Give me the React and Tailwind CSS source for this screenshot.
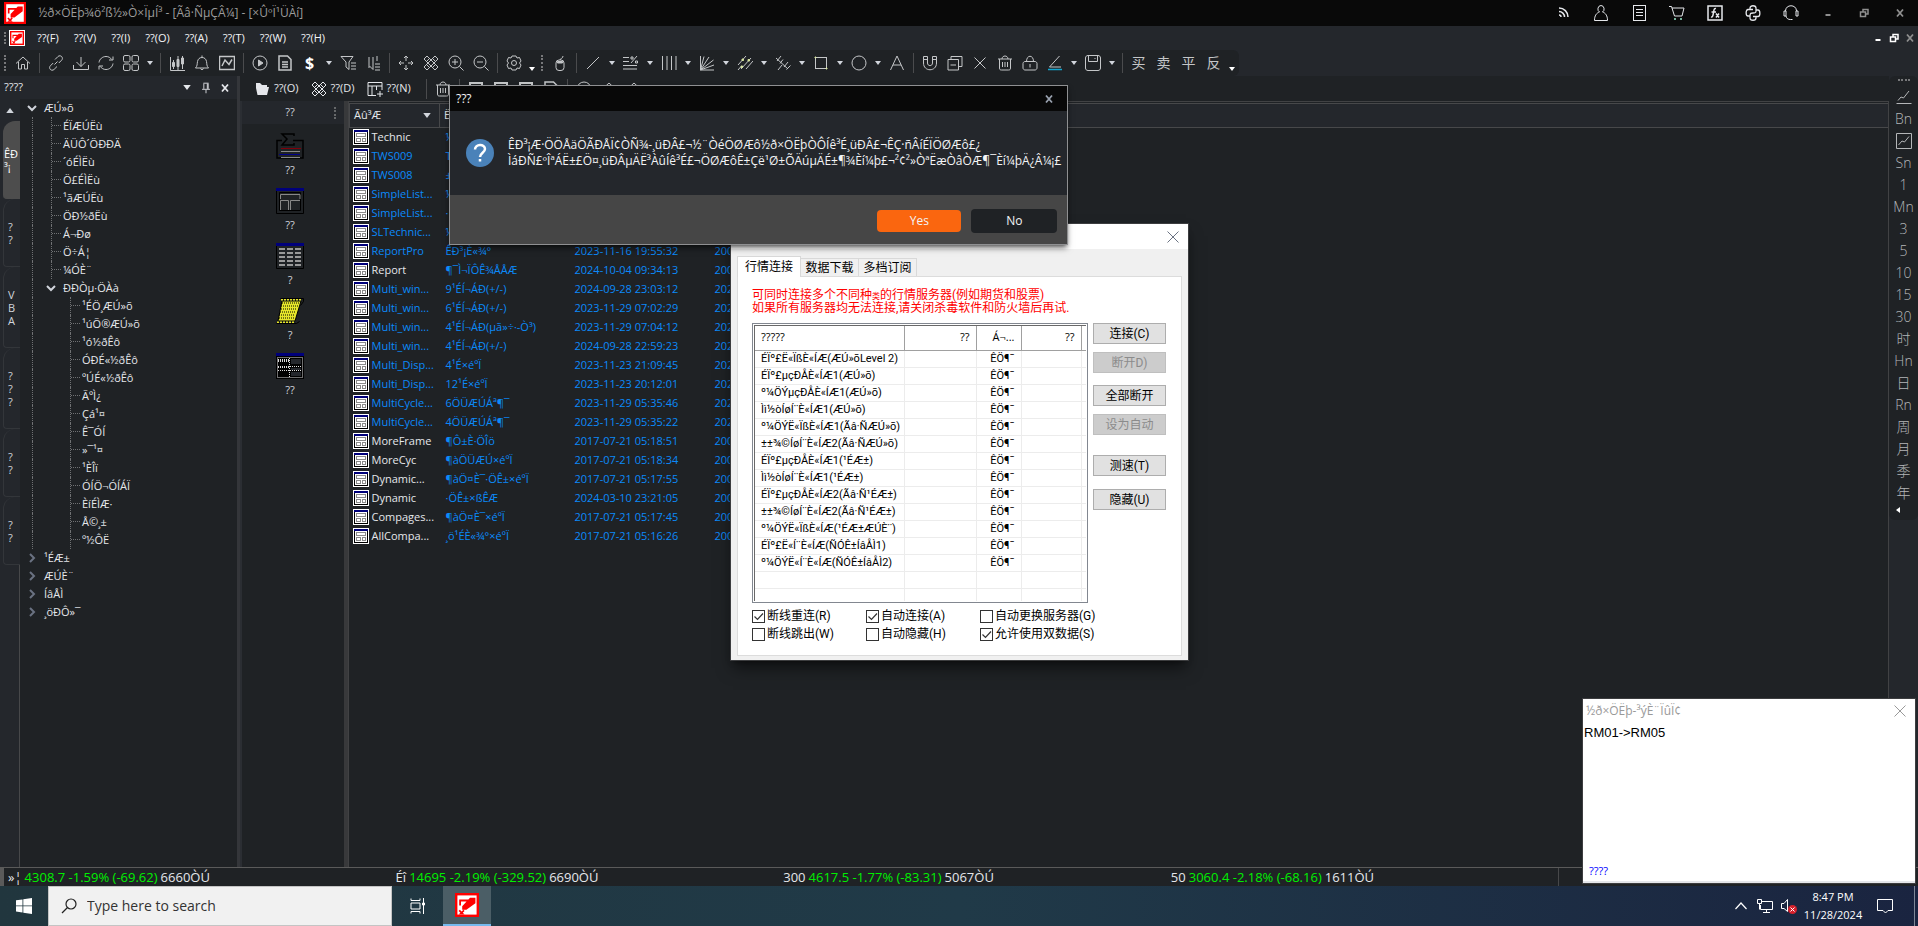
import React from "react";

const UI_FONT = "font-['Open_Sans','Noto_Sans_CJK_SC',sans-serif]";

/* 16x16 line drawings used by every toolbar */
const ICONS = {
  home: <path d="M1 8.5 8 2l7 6.5M3.5 7v7h3v-4.5h3V14h3V7" />,
  link: <path d="m6.5 9.5 3-3M7 4.5l2.8-2.8a2.6 2.6 0 0 1 4.5 1c.3 1-.1 1.900-.7 2.500L10.800 8M9 11.500 6.200 14.300a2.600 2.600 0 0 1-4.500-1c-.3-1 .1-1.900.7-2.500L5.200 8" />,
  download: <path d="M8 2v9.500M3.500 7 8 11.500 12.500 7M.5 10v4.500h15V10" />,
  refresh: <path d="M1 7.500C1.500 4 4.500 1.500 8 1.500c2.500 0 4.500 1.200 5.700 3M15 1.500v3.500h-4M15 8.500c-.5 3.500-3.500 6-7 6-2.500 0-4.500-1.200-5.700-3M1 14.500V11h4" />,
  grid: (
    <>
      <rect x=".5" y=".5" width="6.500" height="6.500" rx="1.500" />
      <rect x="9" y=".5" width="6.500" height="6.500" rx="1.500" />
      <rect x=".5" y="9" width="6.500" height="6.500" rx="1.500" />
      <rect x="9" y="9" width="6.500" height="6.500" rx="1.500" />
    </>
  ),
  candles: (
    <>
      <path d="M1.500 2v13.500H16M4.500 5v9M9 1v14M13.500 1v13" />
      <path fill="currentColor" d="M3.500 7.500h2v4h-2zM8 4.500h2v7H8zM12.500 3h2v6h-2z" />
    </>
  ),
  bell: <path d="M1.500 13h13C12.500 11 13 9 12.500 6.500 12 4 10.500 2.500 8 2.500S4 4 3.500 6.500C3 9 3.500 11 1.500 13ZM8 .5v2M6.500 13.500c.3 1.500 2.700 1.500 3 0" />,
  chart: (
    <>
      <rect x=".5" y="1.500" width="15" height="13" strokeWidth="1.500" />
      <path strokeWidth="1.500" d="m3 11 3-6 4 4.500 3-5" />
    </>
  ),
  play: (
    <>
      <circle cx="8" cy="8" r="7" />
      <path fill="currentColor" d="M6.500 5v6L11 8z" />
    </>
  ),
  doc: <path strokeWidth="1.500" d="M2 1h8.500L14 4.500V15H2zM5 7h6M5 9.500h6M5 12h6" />,
  filter: <path d="M1 1.500h12L9 7v7.500L6 12V7L1 1.500M11 8h5M11 11h5M11 14h5" />,
  sort: <path d="M4 13V2M8 2v12.500L4.500 11M10 9h5M10 12h5M10 15h5M12 1v5" />,
  move: <path d="M8 1v5M8 10v5M1 8h5M10 8h5M6 3l2-2 2 2M6 13l2 2 2-2M3 6 1 8l2 2M13 6l2 2-2 2" />,
  tools: <path d="m1 4 3-3 11 11-3 3zM12 1l3 3L4 15l-3-3zM4 6l2-2M10 12l2-2M10 4l2 2M4 10l2 2" />,
  zoomIn: <path d="M7 1a6 6 0 1 0 0 12A6 6 0 1 0 7 1ZM11.500 11.500 15.500 15.500M4 7h6M7 4v6" />,
  zoomOut: <path d="M7 1a6 6 0 1 0 0 12A6 6 0 1 0 7 1ZM11.500 11.500 15.500 15.500M4 7h6" />,
  gear: (
    <>
      <path d="M6 1h4l1 2 2.500-.5L15 6l-1.500 2L15 10l-1.500 3.500L11 13l-1 2H6l-1-2-2.500.5L1 10l1.500-2L1 6l1.500-3.500L5 3z" />
      <circle cx="8" cy="8" r="2.500" />
    </>
  ),
  mouse: (
    <>
      <rect x="4" y="5" width="8" height="10.500" rx="3" />
      <path fill="currentColor" d="M5.500 6.500h5v1.500h-5z" />
      <path d="M8 5c0-2 3-1 3-4" />
    </>
  ),
  line: <path d="M2 14 14 2" />,
  percent: <path d="M0 2.500h6M0 6.500h6M0 10.500h14M0 14h14M14 1 8 8M8 2h2v2H8zM12.500 6h2v2h-2z" />,
  bars: <path d="M1.500 1v14M6 1v14M10.500 1v14M15 1v14" />,
  fan: <path d="M1.500 1v14H15M1.500 15 5 1.500M1.500 15 10 2M1.500 15 14.500 5M1.500 15 15 10" />,
  trend: (
    <>
      <path d="M1 10 9 1M4 14 14 3M1 15 4 11.500M9 14 16 6" />
      <path stroke="#d6e3a0" fill="#d6e3a0" d="M5 4h1.500v1.500H5zM11 4.500h1.500V6H11zM4 11h1.500v1.500H4z" />
    </>
  ),
  pitch: <path d="m1 3 12 11M2 6l4-5M5 8.500l3-4M9 12l4-5M11.500 14.500l4-4M3 15l4-5" />,
  rect: (
    <>
      <rect x="2.500" y="2.500" width="11" height="11" />
      <path stroke="#d6e3a0" fill="#d6e3a0" d="M2 2h1v1H2zM13 13h1v1h-1z" />
    </>
  ),
  circle: <circle cx="8" cy="8" r="7" />,
  letter: <path d="M1.500 15 8 1l6.500 14M4 10h8" />,
  magnet: <path d="M1.500 1.500h4V8c0 3.500 5 3.500 5 0V1.500h4V8c0 9-13 9-13 0ZM1.500 4.500h4M10.500 4.500h4" />,
  copy: <path d="M1 4.500h10.500V15H1zM4 4.500v-3h11v10h-3.500M3.500 10h5.500" />,
  cross: <path d="m2.500 2.500 11 11M13.500 2.500l-11 11" />,
  trash: <path d="M1 4h14M2.500 4v9c0 1.500.5 2 2 2h7c1.500 0 2-.5 2-2V4M5 4c0-4 6-4 6 0M5.500 7v5M8 7v5M10.500 7v5" />,
  lock: <path d="M3 6.500h10c1 0 2 1 2 2V13c0 1-1 2-2 2H3c-1 0-2-1-2-2V8.500c0-1 1-2 2-2ZM4.500 6.500c0-7 7-7 7 0M8 9v3.500" />,
  pen: (
    <>
      <path d="M12.500 1 2.500 12H14" />
      <path stroke="#12a5cf" strokeWidth="1.500" d="M1 14.500h14" />
    </>
  ),
  save: <path d="M3 .5h10c1.500 0 2.500 1 2.500 2.500v10c0 1.500-1 2.500-2.500 2.500H3C1.500 15.500.5 14.500.5 13V3C.5 1.500 1.500.5 3 .5ZM3.500 1v5.500h9V1M9.500 3.500h1" />,
  folder: <path fill="currentColor" stroke="none" d="M2 2h4l2 2h5v2h2l-2 8H3.500L2 7z" />,
  newTable: <path d="M9 14.500H1v-13h14V9M1 5h14M5 5v9.500M9.500 5v4M13 10v6M10 13h6" />,
  square: <path strokeWidth="2" d="M2 2h12v12H2zM5 6h6" />,
  rss: <path strokeWidth="1.500" d="M4 3c5 0 9 4 9 9M4 6.500c3 0 5.500 2.500 5.500 5.500M4 10c1 0 2 1 2 2" />,
  user: <path d="M8 .5a3.300 3.500 0 0 1 1.500 6.500c3 1 5 3.500 5 8.500h-13c0-5 2-7.500 5-8.500A3.300 3.500 0 0 1 8 .5Z" />,
  sheet: (
    <>
      <rect x="2.500" y=".5" width="12" height="15" />
      <path d="M5 4.500h7M5 7.500h7M5 10.500h7" />
    </>
  ),
  cart: (
    <>
      <path d="M0 1.500h2.500L5.500 11h7.500l2-8H3" />
      <path stroke="#8fd8bd" fill="#8fd8bd" d="M5.500 13.500h1v1h-1zM11.500 13.500h1v1h-1z" />
    </>
  ),
  fx: (
    <>
      <rect x="1" y="1" width="14" height="14" strokeWidth="1.500" />
      <path strokeWidth="1.500" d="M9 3.500c-2-.5-2 1.500-2.500 4S6 12.500 4 12M4.500 7H9M9 8.500l3 4M12 8.500l-3 4" />
    </>
  ),
  python: <path strokeWidth="1.300" d="M5 4.500V3c0-3 6-3 6 0v3c0 2-1 2-3 2s-3 0-3 3M8 4.500H3C.5 4.500.5 11 3 11h2M11 11.500V13c0 3-6 3-6 0v-2M11 5h2c2.500 0 2.500 6.500 0 6.500H8" />,
  headset: <path d="M2.500 6c0-7 11-7 11 0M1 6h2v5H1zM13 6h2v5h-2zM3 11c.5 2.500 2 3.500 4.500 3.500h2" />,
  minimise: <path strokeWidth="2" d="M5.500 10h5" />,
  restore: <path strokeWidth="1.500" d="M4.500 7h5v4.500h-5zM7 6.500v-2h5V9H9.500" />,
  close: <path strokeWidth="1.800" d="m5 4.500 6 7M11 4.500l-6 7" />,
  lineChart: <path d="M2 11.500 5 8l2.500 1L13 2M.5 14.500h15" />,
  boxChart: <path d="M.5.5h15v15H.5zM2.500 12 6 8l2.500 1L13 3.500" />,
};

const Icon = ({ name, className = "" }) => (
  <svg viewBox="0 0 16 16" fill="none" stroke="currentColor" className={`w-4 h-4 shrink-0 ${className}`}>
    {ICONS[name]}
  </svg>
);

const Caret = ({ className = "w-1.5 h-1" }) => (
  <svg viewBox="0 0 6 4" className={`shrink-0 ${className}`} fill="currentColor">
    <path d="M0 0h6L3 4z" />
  </svg>
);

const Logo = ({ className }) => (
  <svg viewBox="0 0 20 20" className={className}>
    <path fill="#f00" d="M0 0h20v20H0z" />
    <path fill="#fff" d="M2 2h16v16H2z" />
    <path fill="#f00" d="M3.500 5.500h9V7H5v3.500H3.500zM12.500 4H17v4.500L9.500 14H6v-3zM4 14l1.500 1.500L7 14l1 1-1.500 1.500L8 18H3l1.500-1.500L3 15z" />
  </svg>
);

const MENU = ["??(F)", "??(V)", "??(I)", "??(O)", "??(A)", "??(T)", "??(W)", "??(H)"];
const TITLE_ICONS = ["rss", "user", "sheet", "cart", "fx", "python", "headset"];

/* "|" separator, "v" caret of the previous tool, ":" grip, "." overflow arrow */
const TOOLS = [
  ":", "home", "|", "link", "download", "refresh", "grid", "v", "|", "candles", "bell", "chart", "|",
  "play", "doc", "$", "v", "filter", "sort", "|", "move", "tools", "zoomIn", "zoomOut", "|", "gear", ".",
  ":", "mouse", "|", "line", "v", "percent", "v", "bars", "v", "fan", "v", "trend", "v", "pitch", "v",
  "rect", "v", "circle", "v", "letter", "|", "magnet", "copy", "cross", "trash", "lock", "pen", "v",
  "save", "v", "|", "买", "卖", "平", "反", ".",
];

const Tool = ({ item }) => {
  if (item === "|") return <span className="w-2 flex justify-center"><i className="w-px h-5 bg-[#4a4b4d]" /></span>;
  if (item === "v") return <button aria-label="more" className="w-[13px] h-6 flex items-center justify-center text-gray-300"><Caret /></button>;
  if (item === ".") return <button aria-label="overflow" className="w-[11px] h-6 flex items-end justify-center pb-1 text-white"><Caret /></button>;
  if (item === ":") return <span className="w-2.5 flex justify-center"><i className="h-4 border-l-2 border-dotted border-[#77787a]" /></span>;
  return (
    <button aria-label={item} className="w-[25px] h-6 flex items-center justify-center text-[#c4c6c8] text-sm">
      {ICONS[item] ? <Icon name={item} /> : <span className={item === "$" ? "font-bold text-base text-white" : ""}>{item}</span>}
    </button>
  );
};

const TitleBar = () => (
  <header className="h-[26px] bg-[#090909] flex items-center justify-between pl-1">
    <div className="flex items-center gap-3">
      <Logo className="w-[22px] h-[22px]" />
      <h1 className="text-xs text-[#9c9c9c]">½ð×ÖËþ¾ö²ß½»Ò×ÏµÍ³ - [Ãâ·ÑµÇÂ¼] - [×ÛºÏ¹ÜÀí]</h1>
    </div>
    <div className="flex text-gray-200">
      {TITLE_ICONS.map((name) => (
        <button key={name} aria-label={name} className="w-[38px] flex justify-center">
          <Icon name={name} />
        </button>
      ))}
      {["minimise", "restore", "close"].map((name) => (
        <button key={name} aria-label={name} className="w-9 flex justify-center text-[#8f8f8f]">
          <Icon name={name} />
        </button>
      ))}
    </div>
  </header>
);

const MenuBar = () => (
  <div className="h-6 flex items-center justify-between pl-1 text-[11px] text-gray-100">
    <nav className="flex items-center gap-px">
      <i className="h-3 border-l-2 border-dotted border-[#77787a]" />
      <span className="bg-white p-px ml-0.5 mr-1"><Logo className="w-3.5 h-3.5" /></span>
      {MENU.map((label) => (
        <button key={label} className="px-[7px]">{label}</button>
      ))}
    </nav>
    <div className="flex text-white">
      <button aria-label="minimise" className="w-4"><Icon name="minimise" /></button>
      <button aria-label="restore" className="w-4"><Icon name="restore" /></button>
      <button aria-label="close" className="w-4 text-[#8f8f8f]"><Icon name="close" /></button>
    </div>
  </div>
);

const SIDE_TABS = [
  { lines: ["ÊÐ", "³¡"], height: "h-[78px]", active: true },
  { lines: ["?", "?"], height: "h-[68px]" },
  { lines: ["V", "B", "A"], height: "h-[81px]" },
  { lines: ["?", "?", "?"], height: "h-[81px]" },
  { lines: ["?", "?"], height: "h-[68px]" },
  { lines: ["?", "?"], height: "h-[68px]" },
];

const TREE = [
  [0, "ÆÚ»õ", "open"],
  [1, "ÉÏÆÚËù"], [1, "ÄÜÔ´ÖÐÐÄ"], [1, "´óÉÌËù"], [1, "Ö£ÉÌËù"], [1, "¹ãÆÚËù"],
  [1, "ÖÐ½ðËù"], [1, "Á¬Ðø"], [1, "Ö÷Á¦"], [1, "¼ÓÈ¨"],
  [1, "ÐÐÒµ·ÖÀà", "open"],
  [2, "¹ÉÖ¸ÆÚ»õ"], [2, "¹úÕ®ÆÚ»õ"], [2, "¹ó½ðÊô"], [2, "ÓÐÉ«½ðÊô"], [2, "ºÚÉ«½ðÊô"],
  [2, "ÃºÌ¿"], [2, "Çá¹¤"], [2, "Ê¯ÓÍ"], [2, "»¯¹¤"], [2, "¹ÈÎï"], [2, "ÓÍÖ¬ÓÍÁÏ"],
  [2, "ÈíÉÌÆ·"], [2, "Å©¸±"], [2, "º½ÔË"],
  [0, "¹ÉÆ±", "closed"], [0, "ÆÚÈ¨", "closed"], [0, "ÍâÅÌ", "closed"], [0, "¸öÐÔ»¯", "closed"],
];

const Guide = () => <i className="w-3 ml-[7px] h-full border-l border-dotted border-[#6f7173]" />;
const Elbow = () => (
  <i className="w-3 ml-[7px] h-full border-l border-dotted border-[#6f7173]">
    <i className="block w-[9px] h-1/2 border-b border-dotted border-[#6f7173]" />
  </i>
);
const Chevron = ({ state }) => (
  <button aria-label={state} className="w-[19px] flex items-center pl-0.5">
    <svg viewBox="0 0 10 10" className={`w-2.5 h-2.5 ${state === "open" ? "text-gray-300" : "text-gray-500"}`} fill="none" stroke="currentColor" strokeWidth="2">
      <path d={state === "open" ? "M1 3l4 4 4-4" : "M3 1l4 4-4 4"} />
    </svg>
  </button>
);

const TreePanel = () => (
  <section className="w-[237px] shrink-0 flex flex-col">
    <div className="h-[23px] flex items-center justify-between pl-1 pr-1 text-[11px] text-gray-200">
      <h2>????</h2>
      <div className="flex items-center gap-1">
        <button aria-label="options"><Caret className="w-2 h-[5px] mr-1" /></button>
        <button aria-label="pin">
          <svg viewBox="0 0 16 16" className="w-3.5 h-3.5" fill="none" stroke="currentColor"><path d="M5 2.500h6M5.500 3v6M10.500 3v6M9.500 3v6M3.500 9.500h9M8 10v4" /></svg>
        </button>
        <button aria-label="close"><Icon name="close" /></button>
      </div>
    </div>
    <div className="flex flex-1">
      <div className="w-5 flex flex-col text-[11px] leading-[13px] text-gray-300">
        <button aria-label="scroll up" className="h-[22px] flex items-center justify-center"><Caret className="rotate-180 w-2 h-[5px]" /></button>
        {SIDE_TABS.map((tab, i) => (
          <button
            key={i}
            className={`ml-[3px] rounded-tl-xl rounded-bl-sm border-b flex flex-col items-start justify-center ${tab.height} ${tab.active ? "bg-[#4d4d4d] border-[#4d4d4d] text-white pl-px" : "border-l border-[#33363a] pl-1"
              }`}
          >
            {tab.lines.map((line, j) => <span key={j}>{line}</span>)}
          </button>
        ))}
        <div className="flex-1 border-r border-[#47484a]" />
      </div>
      <ul className="flex-1 bg-[#1f2225] pl-[5px] text-[11px] text-gray-200">
        {TREE.map(([depth, label, state], i) => (
          <li key={i} className="h-[18px] flex items-center">
            {depth > 0 && <Guide />}
            {depth === 2 && <i className="w-[19px]" />}
            {state ? <Chevron state={state} /> : <Elbow />}
            <span className="whitespace-nowrap">{label}</span>
          </li>
        ))}
      </ul>
    </div>
  </section>
);

/* 28x26 thumbnails in the category column */
const THUMBS = [
  {
    label: "??",
    art: (
      <>
        <path fill="none" stroke="#000" strokeWidth="1.500" d="M6 7.500H1V25h26V7.500H17M18 3V1H6l5 5-5 6h12v-2" />
        <path stroke="#80000a" d="M5 15.500h20" />
        <path stroke="#888" d="M5 18.500h19M5 24.500h19" />
        <path stroke="#00008b" d="M3 21.500h21" />
      </>
    ),
  },
  {
    label: "??",
    art: (
      <>
        <path fill="none" stroke="#000" d="M.5.5h27v25H.5zM3.500 4.500h21v18h-21z" />
        <path fill="#00007b" d="M0 0h28v3H0z" />
        <path fill="none" stroke="#888" d="M4.500 22V12.500h8V22M14.500 22V12.500H24M4.500 11V6.500H24V11" />
      </>
    ),
  },
  {
    label: "?",
    art: (
      <>
        <path fill="none" stroke="#000" d="M.5.5h27v25H.5z" />
        <path fill="#00007b" d="M0 0h28v3H0z" />
        <path stroke="#999" strokeWidth="2" strokeDasharray="6 2" d="M3 6h22M3 10h22M3 14h22M3 18h22M3 22h22" />
      </>
    ),
  },
  {
    label: "?",
    art: (
      <>
        <path fill="#e6e62a" stroke="#000" d="M6 3h19l-6 20H2z" />
        <path stroke="#000" strokeDasharray="1 1" d="M6 5h17M5 8h17M5 11h16M4 14h16M3 17h16M3 20h15" />
        <path stroke="#e6e62a" strokeWidth="2" strokeDasharray="2 1" d="M5 1.500h20M1 24.500h18" />
        <path fill="none" stroke="#000" d="M4.500.5h23v3l-3 4M.5 25.500h20l3-2" />
      </>
    ),
  },
  {
    label: "??",
    art: (
      <>
        <path fill="#000" d="M0 0h28v26H0z" />
        <path fill="#00007b" d="M0 0h28v3H0z" />
        <path fill="none" stroke="#ddd" strokeDasharray="1 1" d="M1.500 4.500h25v20h-25zM2 6.500h11M2 7.500h11M2 8.500h11M2 13.500h24M2 14.500h11M2 17.500h24M13.500 5v19" />
        <path fill="#24272c" d="M15 6h10v5H15zM15 15h10v2H15zM15 19h10v4H15z" />
      </>
    ),
  },
];

const Categories = () => (
  <section className="w-[104px] shrink-0 border-l-2 border-[#2b2e33] bg-[#1f2225]">
    <div className="h-[23px] bg-[#24272c] flex items-center pr-2 text-[11px] text-gray-300">
      <h2 className="flex-1 text-center pl-1">??</h2>
      <i className="h-3 border-l-2 border-dotted border-[#66686a]" />
    </div>
    <div className="flex flex-col items-center pr-1.5 pt-[9px] text-[11px] text-gray-300">
      {THUMBS.map((thumb, i) => (
        <button key={i} className="h-[55px] flex flex-col items-center gap-[3px]">
          <svg viewBox="0 0 28 26" className="w-7 h-[26px] shrink-0">{thumb.art}</svg>
          <span>{thumb.label}</span>
        </button>
      ))}
    </div>
  </section>
);

/* name, description, modified, created, highlighted */
const FILES = [
  ["Technic", "½", "", "", false],
  ["TWS009", "T", "", "", true],
  ["TWS008", "±", "", "", true],
  ["SimpleList...", "½", "", "", true],
  ["SimpleList...", "·", "", "", true],
  ["SLTechnic...", "½", "", "", true],
  ["ReportPro", "ÊÐ³¡È«¾°", "2023-11-16 19:55:32", "200", true],
  ["Report", "¶¯Ì¬ÏÔÊ¾ÅÅÆ", "2024-10-04 09:34:13", "200", false],
  ["Multi_win...", "9¹ÉÍ¬ÁÐ(+/-)", "2024-09-28 23:03:12", "202", true],
  ["Multi_win...", "6¹ÉÍ¬ÁÐ(+/-)", "2023-11-29 07:02:29", "202", true],
  ["Multi_win...", "4¹ÉÍ¬ÁÐ(µã»÷·-Ò³)", "2023-11-29 07:04:12", "202", true],
  ["Multi_win...", "4¹ÉÍ¬ÁÐ(+/-)", "2024-09-28 22:59:23", "202", true],
  ["Multi_Disp...", "4¹É×éºÏ", "2023-11-23 21:09:45", "202", true],
  ["Multi_Disp...", "12¹É×éºÏ", "2023-11-23 20:12:01", "202", true],
  ["MultiCycle...", "6ÖÜÆÚÁª¶¯", "2023-11-29 05:35:46", "202", true],
  ["MultiCycle...", "4ÖÜÆÚÁª¶¯", "2023-11-29 05:35:22", "202", true],
  ["MoreFrame", "¶Ô±È·ÖÎö", "2017-07-21 05:18:51", "200", false],
  ["MoreCyc", "¶àÖÜÆÚ×éºÏ", "2017-07-21 05:18:34", "200", false],
  ["Dynamic...", "¶àÖ¤È¯·ÖÊ±×éºÏ", "2017-07-21 05:17:55", "200", false],
  ["Dynamic", "·ÖÊ±×ßÊÆ", "2024-03-10 23:21:05", "200", false],
  ["Compages...", "¶àÖ¤È¯×éºÏ", "2017-07-21 05:17:45", "200", false],
  ["AllCompa...", "¸ö¹ÉÈ«¾°×éºÏ", "2017-07-21 05:16:26", "200", false],
];

const FileIcon = () => (
  <svg viewBox="0 0 16 16" className="w-4 h-4 shrink-0" shapeRendering="crispEdges">
    <path fill="#fff" d="M0 0h16v16H0z" />
    <path fill="#000" d="M1 1h14v14H1z" />
    <path fill="#fff" d="M2 3h12v11H2z" />
    <path fill="#00007b" d="M1 1h14v2H1z" />
    <path fill="none" stroke="#8a8a8a" d="M3.500 4.500h9v3h-9zM3.500 9.500h4v3h-4zM9.500 9.500h3v3h-3z" />
  </svg>
);

const FileList = () => (
  <section className="flex-1 min-w-0 border-l border-r border-t border-[#414244] bg-[#1f2225] pt-px">
    <table className="w-full table-fixed border-collapse text-[11px] text-left">
      <colgroup>
        <col className="w-[90px]" />
        <col className="w-[131px]" />
        <col className="w-[140px]" />
        <col />
      </colgroup>
      <thead className="bg-[#24272c] text-gray-200 border-y border-[#47484a]">
        <tr className="h-6">
          <th className="font-normal border-x border-[#47484a] pl-1 pr-2">
            <span className="flex items-center justify-between">Ãû³Æ<Caret className="w-2 h-[5px] text-gray-300" /></span>
          </th>
          <th className="font-normal pl-1">Ë</th>
          <th />
          <th />
        </tr>
      </thead>
      <tbody className="text-[#0b8afa]">
        {FILES.map(([name, desc, modified, created, highlighted], i) => (
          <tr key={i} className="h-[19px] whitespace-nowrap">
            <td className={`pl-[3px] ${highlighted ? "" : "text-gray-200"}`}>
              <span className="flex items-center gap-[3px]"><FileIcon />{name}</span>
            </td>
            <td className="pl-1.5">{desc}</td>
            <td className="pl-1">{modified}</td>
            <td className="pl-1">{created}</td>
          </tr>
        ))}
      </tbody>
    </table>
  </section>
);

const PERIODS = ["lineChart", "Bn", "boxChart", "Sn", "1", "Mn", "3", "5", "10", "15", "30", "时", "Hn", "日", "Rn", "周", "月", "季", "年"];

const PeriodBar = () => (
  <aside className="w-[29px] shrink-0">
    <div className="bg-[#1f2225] rounded-md flex flex-col items-center pt-[3px] pb-1 text-sm text-[#b4b6b8]">
      <i className="w-3 mb-[5px] border-t-2 border-dotted border-[#77787a]" />
      {PERIODS.map((p) => (
        <button key={p} aria-label={p} className="h-[22px] flex items-center justify-center font-light">
          {ICONS[p] ? <Icon name={p} /> : p}
        </button>
      ))}
      <button aria-label="overflow" className="h-3 self-start pl-1.5 text-white"><Caret className="rotate-90 w-1.5 h-1" /></button>
    </div>
  </aside>
);

const FileTools = () => (
  <div className="h-[25px] flex items-center pl-3.5 bg-[#1f2225] text-[11px] text-gray-200">
    <button className="flex items-center gap-1 pr-3"><Icon name="folder" />??(O)</button>
    <button className="flex items-center gap-1 pr-3"><Icon name="tools" />??(D)</button>
    <button className="flex items-center gap-1 pr-3"><Icon name="newTable" />??(N)</button>
    {["|", "trash", "|", "square", "square", "square", "doc", "|", "circle", "home", "home"].map((item, i) => (
      <Tool key={i} item={item} />
    ))}
  </div>
);

const ConfirmDialog = () => (
  <div role="dialog" className="absolute left-[449px] top-[85px] border border-[#8f9092] bg-[#24272c] shadow-md shadow-black/50 text-xs text-gray-100">
    <div className="h-[25px] bg-[#080808] flex items-center justify-between pl-1.5 pr-2.5">
      <h2>???</h2>
      <button aria-label="close" className="text-gray-400"><Icon name="close" /></button>
    </div>
    <div className="h-[84px] flex items-center gap-3.5 pl-4 pr-1.5">
      <svg viewBox="0 0 28 28" className="w-7 h-7 shrink-0">
        <circle cx="14" cy="14" r="14" fill="#4a82b9" />
        <path fill="none" stroke="#fff" strokeWidth="2.500" d="M9 10.500c0-6 10-6 10-.5 0 3.500-5 4-5 8M14 20v2.500" />
      </svg>
      <p className="leading-4 whitespace-nowrap">
        ÊÐ³¡Æ·ÖÖÅäÖÃÐÅÏ¢ÒÑ¾-¸üÐÂ£¬½¨ÒéÖØÆô½ð×ÖËþÒÔÍê³É¸üÐÂ£¬ÊÇ·ñÂíÉÏÖØÆô£¿<br />
        ÌáÐÑ£ºÎªÁË±£Ö¤¸üÐÂµÄË³ÀûÍê³É£¬ÖØÆôÊ±Çë¹Ø±ÕÄúµÄÉ±¶¾Èí¼þ£¬²¢²»ÒªËæÒâÒÆ¶¯Èí¼þÄ¿Â¼¡£
      </p>
    </div>
    <div className="h-[49px] bg-[#464646] flex items-center justify-end gap-2.5 pr-2.5 pt-0.5">
      <button className="w-[84px] h-[22px] rounded bg-[#fa660f]">Yes</button>
      <button className="w-[86px] h-6 rounded bg-[#1f2225]">No</button>
    </div>
  </div>
);

const SERVERS = [
  "ÉÏº£Ë«ÏßÈ«ÍÆ(ÆÚ»õLevel 2)",
  "ÉÏº£µçÐÅÈ«ÍÆ1(ÆÚ»õ)",
  "º¼ÖÝµçÐÅÈ«ÍÆ1(ÆÚ»õ)",
  "Ìì½òÍøÍ¨È«ÍÆ1(ÆÚ»õ)",
  "º¼ÖÝË«ÏßÈ«ÍÆ1(Ãâ·ÑÆÚ»õ)",
  "±±¾©ÍøÍ¨È«ÍÆ2(Ãâ·ÑÆÚ»õ)",
  "ÉÏº£µçÐÅÈ«ÍÆ1(¹ÉÆ±)",
  "Ìì½òÍøÍ¨È«ÍÆ1(¹ÉÆ±)",
  "ÉÏº£µçÐÅÈ«ÍÆ2(Ãâ·Ñ¹ÉÆ±)",
  "±±¾©ÍøÍ¨È«ÍÆ2(Ãâ·Ñ¹ÉÆ±)",
  "º¼ÖÝË«ÏßÈ«ÍÆ(¹ÉÆ±ÆÚÈ¨)",
  "ÉÏº£Ë«Í¨È«ÍÆ(ÑÓÊ±ÍâÅÌ1)",
  "º¼ÖÝË«Í¨È«ÍÆ(ÑÓÊ±ÍâÅÌ2)",
  "",
  "",
];

const OPTIONS = [
  ["断线重连(R)", true],
  ["自动连接(A)", true],
  ["自动更换服务器(G)", false],
  ["断线跳出(W)", false],
  ["自动隐藏(H)", false],
  ["允许使用双数据(S)", true],
];

const ActionButton = ({ children, className = "", disabled = false }) => (
  <button disabled={disabled} className={`w-[73px] h-[21px] border border-[#adadad] bg-[#e1e1e1] disabled:bg-[#cccccc] disabled:border-[#bfbfbf] disabled:text-[#8b8b8b] ${className}`}>
    {children}
  </button>
);

const ServerDialog = () => (
  <div role="dialog" className="absolute left-[730px] top-[223px] w-[459px] border border-[#3c3d3f] bg-[#f0f0f0] shadow-lg shadow-black/50 text-xs text-black font-['Roboto','Noto_Sans_CJK_SC',sans-serif]">
    <div className="h-[25px] bg-white flex items-center justify-end pr-[7px]">
      <button aria-label="close" className="text-gray-500"><Icon name="cross" /></button>
    </div>
    <div className="px-1.5 pt-[7px] pb-1">
      <div role="tablist" className="flex items-end">
        <button role="tab" className="h-[21px] w-16 -mb-px bg-white border border-b-0 border-[#d9d9d9] relative">行情连接</button>
        <button role="tab" className="h-[18px] w-[58px] border border-b-0 border-l-0 border-[#d9d9d9]">数据下载</button>
        <button role="tab" className="h-[18px] w-[58px] border border-b-0 border-l-0 border-[#d9d9d9]">多档订阅</button>
      </div>
      <div className="bg-white border border-[#dcdcdc] pl-3.5 pt-3 pb-3">
        <p className="text-[#f00] leading-[13px] whitespace-nowrap">
          可同时连接多个不同种<span className="text-[8px] leading-none">类</span>的行情服务器(例如期货和股票)<br />
          如果所有服务器均无法连接,请关闭杀毒软件和防火墙后再试.
        </p>
        <div className="flex gap-[5px] mt-2">
          <div className="w-[336px] h-[280px] border border-[#828790] p-px overflow-hidden">
            <div className="h-full border-l border-t border-[#696969] overflow-hidden">
              <table className="w-full table-fixed border-collapse">
                <colgroup>
                  <col className="w-[149px]" />
                  <col className="w-[72px]" />
                  <col className="w-[45px]" />
                  <col className="w-[60px]" />
                  <col />
                </colgroup>
                <thead>
                  <tr className="h-6 border-b border-[#a0a0a0] font-['Open_Sans',sans-serif] text-[11px]">
                    <th className="font-normal text-left pl-1.5 border-r border-[#a0a0a0]">?????</th>
                    <th className="font-normal text-right pr-1.5 border-r border-[#a0a0a0]">??</th>
                    <th className="font-normal text-right pr-1.5 border-r border-[#a0a0a0]">Á¬...</th>
                    <th className="font-normal text-right pr-1.5 border-r border-[#a0a0a0]">??</th>
                    <th />
                  </tr>
                </thead>
                <tbody className="text-[11px]">
                  {SERVERS.map((name, i) => (
                    <tr key={i} className="h-[17px] leading-4 border-b border-[#ececec] whitespace-nowrap">
                      <td className="pl-1.5 border-r border-[#ececec]">{name}</td>
                      <td className="border-r border-[#ececec]" />
                      <td className="border-r border-[#ececec] text-right pr-1.5">{name && "ÊÖ¶¯"}</td>
                      <td className="border-r border-[#ececec]" />
                      <td />
                    </tr>
                  ))}
                </tbody>
              </table>
            </div>
          </div>
          <div className="flex flex-col">
            <ActionButton>连接(C)</ActionButton>
            <ActionButton disabled className="mt-2">断开D)</ActionButton>
            <ActionButton className="mt-3">全部断开</ActionButton>
            <ActionButton disabled className="mt-2">设为自动</ActionButton>
            <ActionButton className="mt-5">测速(T)</ActionButton>
            <ActionButton className="mt-[13px]">隐藏(U)</ActionButton>
          </div>
        </div>
        <div className="grid grid-cols-[114px_114px_1fr] mt-1">
          {OPTIONS.map(([label, checked]) => (
            <label key={label} className="h-[18px] flex items-center gap-0.5">
              <span className="grid w-[13px] h-[13px]">
                <input type="checkbox" defaultChecked={checked} className="peer appearance-none col-start-1 row-start-1 w-[13px] h-[13px] border border-[#333] bg-white" />
                <svg viewBox="0 0 13 13" className="col-start-1 row-start-1 w-[13px] h-[13px] hidden peer-checked:block pointer-events-none" fill="none" stroke="#333" strokeWidth="1.200">
                  <path d="m2.500 6.500 3 3 5.500-6" />
                </svg>
              </span>
              {label}
            </label>
          ))}
        </div>
      </div>
    </div>
  </div>
);

const Notice = () => (
  <div role="dialog" className="absolute right-0.5 bottom-[42px] w-[334px] h-[186px] border border-[#3c3d3f] bg-white flex flex-col">
    <div className="h-6 flex items-center justify-between pl-[3px] pr-[7px] text-xs text-[#999]">
      <h2>½ð×ÖËþ-³ýÈ¨ÏûÏ¢</h2>
      <button aria-label="close"><Icon name="cross" /></button>
    </div>
    <p className="flex-1 pl-px text-[13px] leading-5 text-black font-['Liberation_Sans',sans-serif]">RM01-&gt;RM05</p>
    <a href="#" className="pl-1.5 pb-0.5 text-[11px] text-[#0000ff] border-b-2 border-[#e4e6ea]">????</a>
  </div>
);

const QUOTES = [
  ["»¦", "4308.7 -1.59% (-69.62)", "6660ÒÚ"],
  ["Éî", "14695 -2.19% (-329.52)", "6690ÒÚ"],
  ["300", "4617.5 -1.77% (-83.31)", "5067ÒÚ"],
  ["50", "3060.4 -2.18% (-68.16)", "1611ÒÚ"],
];

const StatusBar = () => (
  <footer className="h-[19px] shrink-0 border-t border-[#5a5a5a] bg-[#1f2225] flex items-center text-[13px] text-gray-200">
    <i className="w-1 h-full bg-[#5a5a5a]" />
    <div className="w-[81.1%] pl-1 h-full grid grid-cols-4 items-center border-r border-[#47484a]">
      {QUOTES.map(([name, move, volume]) => (
        <span key={name} className="flex gap-[3px] whitespace-nowrap">
          {name}
          <span className="text-[#00f000]">{move}</span>
          {volume}
        </span>
      ))}
    </div>
  </footer>
);

const Taskbar = () => (
  <footer className="h-10 shrink-0 flex justify-between bg-linear-to-r from-[#21363e] via-[#203a48] to-[#1a2440] text-white">
    <div className="flex">
      <button aria-label="Start" className="w-12 flex items-center justify-center">
        <svg viewBox="0 0 16 16" className="w-4 h-4" fill="#fff"><path d="M0 2.300 6.500 1.400v6.100H0zM7.300 1.300 16 0v7.500H7.300zM0 8.300h6.500v6.200L0 13.600zM7.300 8.300H16V16l-8.700-1.300z" /></svg>
      </button>
      <label className="w-[344px] flex items-center gap-2.5 pl-3 bg-[#f1f1f1] border border-[#c4c4c4] text-[#222]">
        <svg viewBox="0 0 16 16" className="w-4 h-4" fill="none" stroke="currentColor" strokeWidth="1.200"><circle cx="10" cy="6" r="5" /><path d="M6.500 9.500 1 15" /></svg>
        <input type="text" aria-label="Search" placeholder="Type here to search" className="flex-1 bg-transparent outline-none text-sm placeholder:text-[#333]" />
      </label>
      <button aria-label="Task View" className="w-[51px] flex items-center justify-center">
        <svg viewBox="0 0 16 16" className="w-4 h-4" fill="none" stroke="#fff"><path d="M1 .5v2h9v-2M1 5h9v6H1zM1 15.500v-2h9v2M13.500 0v16" /><path fill="#fff" d="M12.500 5h2v2h-2z" /></svg>
      </button>
      <button aria-label="App" className="w-12 bg-[#4b5e66] border-b-2 border-[#76b9ed] flex items-center justify-center">
        <Logo className="w-6 h-6" />
      </button>
    </div>
    <div className="flex items-center text-xs">
      <button aria-label="Hidden icons" className="w-6 flex justify-center">
        <svg viewBox="0 0 12 12" className="w-3 h-3" fill="none" stroke="#fff" strokeWidth="1.200"><path d="m.5 9 5.500-6 5.500 6" /></svg>
      </button>
      <button aria-label="Network" className="w-6 flex justify-center">
        <svg viewBox="0 0 16 16" className="w-4 h-4" fill="none" stroke="#fff"><path d="M5 3.500h10.500v8H3.500V7M9.500 12v2.500M6 14.500h7M.5 1.500h4v4h-4zM2.500 5.500v6" /></svg>
      </button>
      <button aria-label="Volume muted" className="w-6 flex justify-center">
        <svg viewBox="0 0 16 16" className="w-4 h-4" fill="none" stroke="#fff">
          <path d="M.5 5.500H3l3.500-4v12L3 10.500H.5z" />
          <circle cx="11.500" cy="11.500" r="4.500" fill="#d5202c" stroke="none" />
          <path d="m9.500 9.500 4 4M13.500 9.500l-4 4" />
        </svg>
      </button>
      <button className="w-16 leading-[18px] text-center text-[11px]">8:47 PM<br />11/28/2024</button>
      <button aria-label="Notifications" className="w-10 mr-[9px] flex justify-center">
        <svg viewBox="0 0 16 16" className="w-4 h-4" fill="none" stroke="#fff"><path d="M.5 1.500h15v11H11L8.500 15 6 12.500H.5z" /></svg>
      </button>
      <i className="w-1 h-full border-l border-[#7f8797]" />
    </div>
  </footer>
);

const App = () => (
  <div className={`relative min-h-screen flex flex-col overflow-hidden bg-[#24272c] ${UI_FONT}`}>
    <TitleBar />
    <MenuBar />
    <div className="flex">
      <div className="h-[26px] flex items-center bg-[#1f2225] rounded-r-md pr-0.5">
        {TOOLS.map((item, i) => <Tool key={i} item={item} />)}
      </div>
    </div>
    <main className="flex-1 flex">
      <TreePanel />
      <div className="flex-1 min-w-0 flex flex-col border-l-[3px] border-[#34363a]">
        <FileTools />
        <div className="flex flex-1">
          <Categories />
          <i className="w-1 bg-[#38393b]" />
          <FileList />
        </div>
      </div>
      <PeriodBar />
    </main>
    <StatusBar />
    <Taskbar />
    <ServerDialog />
    <ConfirmDialog />
    <Notice />
  </div>
);

export default App;
